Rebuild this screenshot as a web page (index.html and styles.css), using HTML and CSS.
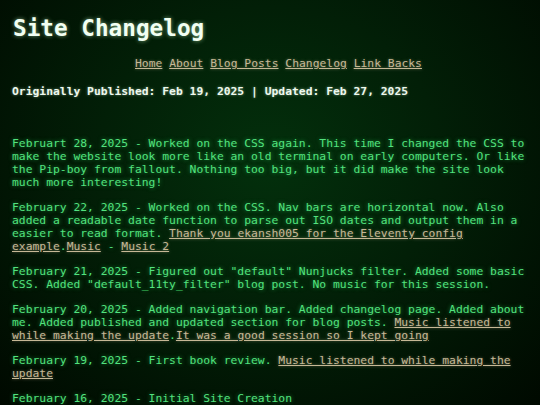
FILE: index.html
```html
<!DOCTYPE html>
<html lang="en">
<head>
<meta charset="utf-8">
<title>Site Changelog</title>
<link rel="stylesheet" href="styles.css">
</head>
<body>
<div class="page">
  <h1 class="title">Site Changelog</h1>
  <nav class="nav">
    <a href="#">Home</a> <a href="#">About</a> <a href="#">Blog Posts</a> <a href="#">Changelog</a> <a href="#">Link Backs</a>
  </nav>
  <p class="meta">Originally Published: Feb 19, 2025 | Updated: Feb 27, 2025</p>
  <div class="entries">
    <p class="entry">Februart 28, 2025 - Worked on the CSS again. This time I changed the CSS to make the website look more like an old terminal on early computers. Or like the Pip-boy from fallout. Nothing too big, but it did make the site look much more interesting!</p>
    <p class="entry">February 22, 2025 - Worked on the CSS. Nav bars are horizontal now. Also added a readable date function to parse out ISO dates and output them in a easier to read format. <a href="#">Thank you ekansh005 for the Eleventy config example</a>.<a href="#">Music</a> - <a href="#">Music 2</a></p>
    <p class="entry">February 21, 2025 - Figured out "default" Nunjucks filter. Added some basic CSS. Added "default_11ty_filter" blog post. No music for this session.</p>
    <p class="entry">February 20, 2025 - Added navigation bar. Added changelog page. Added about me. Added published and updated section for blog posts. <a href="#">Music listened to while making the update</a>.<a href="#">It was a good session so I kept going</a></p>
    <p class="entry">February 19, 2025 - First book review. <a href="#">Music listened to while making the update</a></p>
    <p class="entry">February 16, 2025 - Initial Site Creation</p>
  </div>
</div>
</body>
</html>
```
FILE: styles.css
```css
html, body {
  margin: 0;
  padding: 0;
  height: 100%;
}
body {
  background: radial-gradient(ellipse at 50% 40%, #03300c 0%, #021f07 45%, #000900 100%);
  font-family: "DejaVu Sans Mono", "Liberation Mono", monospace;
  font-size: 11.35px;
  line-height: 13px;
  color: #52e27e;
  overflow: hidden;
}
.page {
  padding: 1px 12px 0 12px;
}
.title {
  font-size: 22.7px;
  line-height: 26px;
  font-weight: bold;
  color: #f2fff2;
  margin: 14px 0 0 1px;
  text-shadow: 0 0 4px rgba(200, 255, 200, 0.6);
}
.nav {
  text-align: center;
  margin: 16px 0 0 0;
  padding-left: 17px;
}
a {
  color: #c6b896;
  text-decoration: underline;
  text-shadow: 0 0 3px rgba(198, 184, 150, 0.5);
}
.meta {
  font-weight: bold;
  color: #eef8ee;
  margin: 15px 0 0 0;
  text-shadow: 0 0 3px rgba(220, 255, 220, 0.5);
}
.entries {
  margin-top: 39px;
}
.entry {
  margin: 0 0 12px 0;
  text-shadow: 0 0 4px rgba(60, 230, 110, 0.55);
}
```
